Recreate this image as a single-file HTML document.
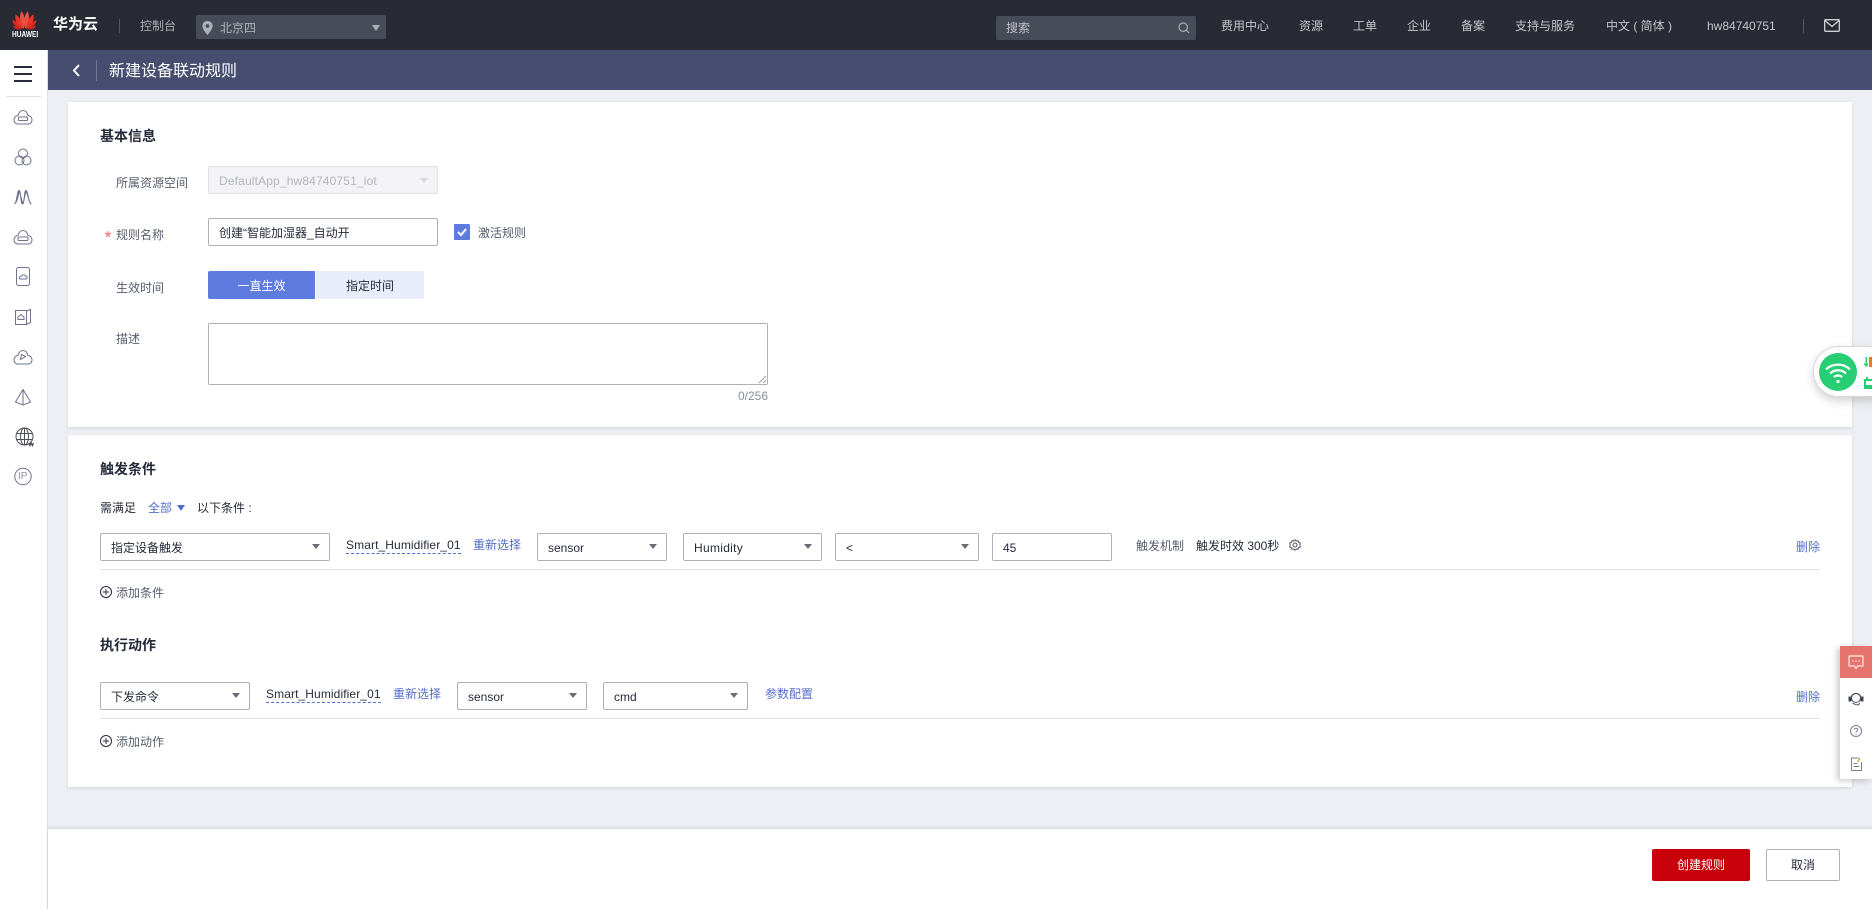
<!DOCTYPE html>
<html lang="zh-CN">
<head>
<meta charset="utf-8">
<title>新建设备联动规则</title>
<style>
*{box-sizing:border-box}
html,body{margin:0;padding:0;width:1872px;height:909px;overflow:hidden;background:#eeeff4}
body{position:relative;font-family:"Liberation Sans","Noto Sans CJK SC",sans-serif;font-size:12px;color:#252b3a}
.a{position:absolute}
.t{position:absolute;line-height:20px;height:20px;white-space:nowrap}
.n{color:#c4c6cc}
.l{color:#575d6c}
.b{font-weight:700;font-size:14px;color:#252b3a}
.lk{color:#526ecc}
.sel,.inp{position:absolute;background:#fff;border:1px solid #adb0b8;border-radius:2px;line-height:28px;padding-left:10px;white-space:nowrap;color:#252b3a}
.sel:after{content:"";position:absolute;right:9px;top:10px;border-style:solid;border-color:#6a6d78 transparent transparent;border-width:5px 4px 0}
.dis{position:absolute;background:#f3f3f5;border:1px solid #dfe1e6;border-radius:2px;line-height:28px;padding-left:10px;white-space:nowrap;color:#b4b6bd;letter-spacing:.15px}
.hr{position:absolute;height:1px;background:#dfe1e6}
.card{position:absolute;background:#fff;box-shadow:0 1px 3px rgba(0,0,0,.12)}
svg{position:absolute;display:block;overflow:visible}
</style>
</head>
<body>
<!-- top bar -->
<div class="a" style="left:0;top:0;width:1872px;height:50px;background:#282b33"></div>
<svg style="left:12px;top:11px" width="25" height="19" viewBox="0 0 25 19">
<path d="M11.700 18C8 13 7 5.500 9.200.5 12.200 2 13.800 10 11.700 18Z" fill="#f0503f"/>
<path d="M13.300 18C17 13 18 5.500 15.800.5 12.800 2 11.200 10 13.300 18Z" fill="#f0503f"/>
<path d="M10.700 18C5 15 2.500 9 3.500 3.500 7.500 5.500 10.700 11.500 10.700 18Z" fill="#e8352a"/>
<path d="M14.300 18C20 15 22.500 9 21.500 3.500 17.500 5.500 14.300 11.500 14.300 18Z" fill="#e8352a"/>
<path d="M9.800 18C5 17 1 13.500 .2 9 4.500 10.500 8.300 14 9.800 18Z" fill="#dd2a20"/>
<path d="M15.200 18C20 17 24 13.500 24.800 9 20.500 10.500 16.700 14 15.200 18Z" fill="#dd2a20"/>
<path d="M9 18.500C5 19 2 17.500 .5 14.800 4 15 7 16 9 18.500Z" fill="#cf231b"/>
<path d="M16 18.500C20 19 23 17.500 24.500 14.800 21 15 18 16 16 18.500Z" fill="#cf231b"/>
</svg>
<div class="t" style="left:12px;top:25px;color:#fff;font-size:8px;font-weight:700;transform:scaleX(.82);transform-origin:left center">HUAWEI</div>
<div class="t" style="left:53px;top:15px;color:#fff;font-size:15px;font-weight:700">华为云</div>
<div class="a" style="left:119px;top:19px;width:1px;height:14px;background:#555963"></div>
<div class="t" style="left:140px;top:16px;color:#aeb0b6">控制台</div>
<div class="a" style="left:196px;top:15px;width:190px;height:24px;background:#484c58;border-radius:2px"></div>
<svg style="left:202px;top:21px" width="11" height="14" viewBox="0 0 11 14"><path d="M5.500 0C2.500 0 .4 2.200.4 5c0 3.400 5.100 9 5.100 9s5.100-5.600 5.100-9C10.600 2.200 8.500 0 5.500 0z" fill="#aeb1b8"/><circle cx="5.500" cy="5" r="1.900" fill="#484c58"/></svg>
<div class="t" style="left:220px;top:18px;color:#aeb1b8">北京四</div>
<svg style="left:372px;top:25px" width="8" height="6"><path d="M0 0h8L4 6z" fill="#aeb1b8"/></svg>
<div class="a" style="left:996px;top:16px;width:200px;height:24px;background:#484c58;border-radius:2px"></div>
<div class="t" style="left:1006px;top:18px;color:#c0c2c8">搜索</div>
<svg style="left:1178px;top:22px" width="12" height="12" viewBox="0 0 12 12" fill="none" stroke="#a8abb2" stroke-width="1.200"><circle cx="5.200" cy="5.200" r="4.200"/><path d="M8.200 8.200 11 11"/></svg>
<div class="t n" style="left:1221px;top:16px">费用中心</div>
<div class="t n" style="left:1299px;top:16px">资源</div>
<div class="t n" style="left:1353px;top:16px">工单</div>
<div class="t n" style="left:1407px;top:16px">企业</div>
<div class="t n" style="left:1461px;top:16px">备案</div>
<div class="t n" style="left:1515px;top:16px">支持与服务</div>
<div class="t n" style="left:1606px;top:16px">中文 ( 简体 )</div>
<div class="t n" style="left:1707px;top:16px">hw84740751</div>
<div class="a" style="left:1803px;top:19px;width:1px;height:14px;background:#555963"></div>
<svg style="left:1824px;top:19px" width="16" height="13" viewBox="0 0 16 13" fill="none" stroke="#cfd1d6" stroke-width="1.300"><rect x=".7" y=".7" width="14.600" height="11.600" rx="1"/><path d="M1 1.500 8 7.500 15 1.500"/></svg>

<!-- sub header -->
<div class="a" style="left:48px;top:50px;width:1824px;height:40px;background:#474d6e"></div>
<svg style="left:72px;top:64px" width="9" height="13" viewBox="0 0 9 13" fill="none" stroke="#fff" stroke-width="2"><path d="M7 1 2 6.500 7 12"/></svg>
<div class="a" style="left:96px;top:60px;width:1px;height:21px;background:#6f7593"></div>
<div class="t" style="left:109px;top:62px;color:#fff;font-size:16px">新建设备联动规则</div>

<!-- sidebar -->
<div class="a" style="left:0;top:50px;width:48px;height:859px;background:#fff;border-right:1px solid #dfe1e6"></div>
<div class="a" style="left:14px;top:66px;width:18px;height:2px;background:#252b3a"></div>
<div class="a" style="left:14px;top:73px;width:18px;height:2px;background:#252b3a"></div>
<div class="a" style="left:14px;top:80px;width:18px;height:2px;background:#252b3a"></div>
<div class="a" style="left:6px;top:96px;width:35px;height:1px;background:#dfe1e6"></div>
<svg style="left:0;top:100px" width="48" height="400" viewBox="0 0 48 400" fill="none" stroke="#6e7390" stroke-width="1">
<path d="M18 24h10c2.800 0 4-2.200 4-4.200 0-2.300-1.800-4.200-4-4.300-.8-3-2.500-5-5-5s-4.200 2-5 5c-2.200.1-4 2-4 4.300 0 2 1.200 4.200 4 4.200z"/><rect x="18.500" y="17" width="9" height="3.500" rx=".5"/>
<circle cx="23" cy="53.500" r="4.500"/><circle cx="19.500" cy="60.500" r="4.500"/><circle cx="26.500" cy="60.500" r="4.500"/>
<path d="M14.500 104c2.500-1 2.500-13.500 4.500-13.500S20.500 104 22.500 104 24 90.500 26 90.500 28 103 31.500 104M14.500 104c1.500-1 3.500-4 4.500-13.500M23 104c1-3 1.500-7 3-13.500M23 104c-1-3-2-7-4-13.500M31 104c-2-3-3-7-5-13.500"/>
<path d="M18 144h10c2.800 0 4-2.200 4-4.200 0-2.300-1.800-4.200-4-4.300-.8-3-2.500-5-5-5s-4.200 2-5 5c-2.200.1-4 2-4 4.300 0 2 1.200 4.200 4 4.200z"/><rect x="18" y="137" width="10" height="3.500" rx="1"/>
<rect x="16.500" y="167.500" width="13" height="18" rx="2"/><path d="M20 179h6c1.500 0 1.500-3-.5-3-.5-1.500-3.500-1.500-4 0-2 0-2.500 3-1.500 3z"/>
<rect x="15.500" y="210.500" width="11" height="14" /><path d="M26.500 211l4-1.500v13l-4 2M18 219.500h6V217l-3-2.500-3 2.500z"/>
<path d="M18 264h10c2.800 0 4-2.200 4-4.200 0-2.300-1.800-4.200-4-4.300-.8-3-2.500-5-5-5s-4.200 2-5 5c-2.200.1-4 2-4 4.300 0 2 1.200 4.200 4 4.200z"/><path d="M20.500 259.500l1-5 4 2z"/>
<path d="M23 289.500l-7.500 12.500 7.500 3 7.500-3zM23 289.500V305"/>
<g stroke="#4b4e58"><circle cx="24.500" cy="336.500" r="8.500"/><ellipse cx="24.500" cy="336.500" rx="4" ry="8.500"/><path d="M16.500 333.500h16M16.500 339.500h16M24.500 328v17"/><path d="M29 343l1 2.500 1.200-2.500 1.200 2.500 1-2.500" stroke-width="1.300"/></g>
<circle cx="23" cy="376.500" r="8.200"/>
</svg>
<div class="t" style="left:18px;top:467px;font-size:10px;color:#8a8fa8">IP</div>

<!-- card 1 -->
<div class="card" style="left:68px;top:102px;width:1784px;height:325px"></div>
<div class="t b" style="left:100px;top:126px">基本信息</div>
<div class="t l" style="left:116px;top:173px">所属资源空间</div>
<div class="dis" style="left:208px;top:166px;width:230px;height:28px">DefaultApp_hw84740751_iot</div>
<svg style="left:420px;top:178px" width="8" height="5"><path d="M0 0h8L4 5z" fill="#d6d8dd"/></svg>
<svg style="left:104px;top:230px" width="8" height="8" viewBox="0 0 8 8"><path d="M4 0l.9 2.900H8L5.500 4.700l1 3L4 5.900 1.500 7.700l1-3L0 2.900h3.100z" fill="#f88a84"/></svg>
<div class="t l" style="left:116px;top:225px">规则名称</div>
<div class="inp" style="left:208px;top:218px;width:230px;height:28px">创建“智能加湿器_自动开</div>
<div class="a" style="left:454px;top:224px;width:16px;height:16px;background:#5e7ce0;border-radius:1px"></div>
<svg style="left:457px;top:228px" width="10" height="8" fill="none" stroke="#fff" stroke-width="2"><path d="M1 4l3 3 5-6"/></svg>
<div class="t l" style="left:478px;top:223px">激活规则</div>
<div class="t l" style="left:116px;top:278px">生效时间</div>
<div class="a" style="left:208px;top:271px;width:107px;height:28px;background:#5e7ce0;border-radius:2px 0 0 2px;color:#fff;text-align:center;line-height:30px">一直生效</div>
<div class="a" style="left:316px;top:271px;width:108px;height:28px;background:#e9edfa;border-radius:0 2px 2px 0;color:#252b3a;text-align:center;line-height:30px">指定时间</div>
<div class="t l" style="left:116px;top:329px">描述</div>
<div class="a" style="left:208px;top:323px;width:560px;height:62px;border:1px solid #adb0b8;border-radius:2px;background:#fff"></div>
<svg style="left:758px;top:375px" width="9" height="9" stroke="#9a9ca6" stroke-width="1"><path d="M8 1 1 8M8 5 5 8"/></svg>
<div class="t" style="right:1104px;top:386px;color:#8a8e99">0/256</div>

<!-- card 2 -->
<div class="card" style="left:68px;top:435px;width:1784px;height:352px"></div>
<div class="t b" style="left:100px;top:459px">触发条件</div>
<div class="t" style="left:100px;top:498px">需满足</div>
<div class="t lk" style="left:148px;top:498px">全部</div>
<svg style="left:177px;top:505px" width="8" height="6"><path d="M0 0h8L4 6z" fill="#526ecc"/></svg>
<div class="t" style="left:197px;top:498px">以下条件 :</div>

<div class="sel" style="left:100px;top:533px;width:230px;height:28px">指定设备触发</div>
<div class="t" style="left:346px;top:535px;color:#252b3a;letter-spacing:.1px">Smart_Humidifier_01</div>
<div class="a" style="left:346px;top:553px;width:115px;border-top:1px dashed #526ecc"></div>
<div class="t lk" style="left:473px;top:535px">重新选择</div>
<div class="sel" style="left:537px;top:533px;width:130px;height:28px">sensor</div>
<div class="sel" style="left:683px;top:533px;width:139px;height:28px"><span style="letter-spacing:.3px">Humidity</span></div>
<div class="sel" style="left:835px;top:533px;width:144px;height:28px">&lt;</div>
<div class="inp" style="left:992px;top:533px;width:120px;height:28px">45</div>
<div class="t l" style="left:1136px;top:536px">触发机制</div>
<div class="t" style="left:1196px;top:536px">触发时效 300秒</div>
<svg style="left:1289px;top:539px" width="12" height="12" viewBox="0 0 12 12" fill="none" stroke="#4f5566" stroke-width="1"><path d="M6 .8 7.300 2l1.700-.3.600 1.700 1.600.6L10.900 6l.3 2-1.600.6-.6 1.700L7.300 10 6 11.200 4.700 10l-1.700.3-.6-1.700L.8 8l.3-2-.3-2 1.600-.6L3 1.700 4.700 2z"/><circle cx="6" cy="6" r="2"/></svg>
<div class="t lk" style="left:1796px;top:537px">删除</div>
<div class="hr" style="left:100px;top:569px;width:1720px"></div>
<svg style="left:100px;top:586px" width="12" height="12" viewBox="0 0 12 12" fill="none" stroke="#252b3a" stroke-width="1"><circle cx="6" cy="6" r="5.500"/><path d="M3 6h6M6 3v6"/></svg>
<div class="t l" style="left:116px;top:583px">添加条件</div>

<div class="t b" style="left:100px;top:635px">执行动作</div>
<div class="sel" style="left:100px;top:682px;width:150px;height:28px">下发命令</div>
<div class="t" style="left:266px;top:684px;color:#252b3a;letter-spacing:.1px">Smart_Humidifier_01</div>
<div class="a" style="left:266px;top:702px;width:115px;border-top:1px dashed #526ecc"></div>
<div class="t lk" style="left:393px;top:684px">重新选择</div>
<div class="sel" style="left:457px;top:682px;width:130px;height:28px">sensor</div>
<div class="sel" style="left:603px;top:682px;width:145px;height:28px">cmd</div>
<div class="t lk" style="left:765px;top:684px">参数配置</div>
<div class="t lk" style="left:1796px;top:687px">删除</div>
<div class="hr" style="left:100px;top:718px;width:1720px"></div>
<svg style="left:100px;top:735px" width="12" height="12" viewBox="0 0 12 12" fill="none" stroke="#252b3a" stroke-width="1"><circle cx="6" cy="6" r="5.500"/><path d="M3 6h6M6 3v6"/></svg>
<div class="t l" style="left:116px;top:732px">添加动作</div>

<!-- footer -->
<div class="a" style="left:48px;top:829px;width:1824px;height:80px;background:#fff;box-shadow:0 -1px 3px rgba(0,0,0,.12)"></div>
<div class="a" style="left:1652px;top:849px;width:98px;height:32px;background:#c7000b;border-radius:2px;color:#fff;text-align:center;line-height:32px">创建规则</div>
<div class="a" style="left:1766px;top:849px;width:74px;height:32px;background:#fff;border:1px solid #adb0b8;border-radius:2px;text-align:center;line-height:30px">取消</div>

<!-- wifi widget -->
<div class="a" style="left:1813px;top:346px;width:80px;height:51px;background:#fff;border:1px solid #d8d8d8;border-radius:26px;box-shadow:0 4px 10px rgba(0,0,0,.18)"></div>
<div class="a" style="left:1819px;top:353px;width:38px;height:38px;border-radius:50%;background:#27ce74"></div>
<svg style="left:1825px;top:362px" width="26" height="22" viewBox="0 0 26 22" fill="none" stroke="#fff" stroke-width="2.200"><path d="M1 7.500C7.500 1 18.500 1 25 7.500M5 11.500c4.500-4.300 11.500-4.300 16 0M9 15c2.300-2 5.700-2 8 0"/><circle cx="13" cy="19.500" r="1.600" fill="#fff" stroke="none"/></svg>
<svg style="left:1864px;top:357px" width="8" height="32" viewBox="0 0 8 32"><path d="M1.500 0h1.500v7l1-1v2l-1.800 2L0 7.500V6l1.500 1z" fill="#27ce74"/><path d="M5 0h3v10H5z" fill="#f07a1e"/><path d="M0 22h2v-2h2v2h4v10H0zM2 24v4h6v-4z" fill="#27ce74" fill-rule="evenodd"/></svg>

<!-- right tools -->
<div class="a" style="left:1840px;top:646px;width:32px;height:133px;background:#fff;box-shadow:-3px 2px 6px rgba(0,0,0,.2)"></div>
<div class="a" style="left:1840px;top:646px;width:32px;height:32px;background:#e5756c"></div>
<svg style="left:1848px;top:655px" width="16" height="15" viewBox="0 0 16 15" fill="none" stroke="#fff" stroke-width="1"><path d="M1 1h14v10H9.500L8 13.500 6.500 11H1z"/><path d="M4.500 6h1M7.500 6h1M10.500 6h1" stroke-width="1.300"/></svg>
<svg style="left:1848px;top:691px" width="16" height="15" viewBox="0 0 16 15" fill="none" stroke="#4a4f60" stroke-width="1"><path d="M3 8C3 .5 13 .5 13 8M4.500 12c4 2.500 7 2.500 7 0"/><circle cx="8" cy="7" r="4.500"/><rect x="1" y="6" width="2" height="4" fill="#252b3a"/><rect x="13" y="6" width="2" height="4" fill="#252b3a"/></svg>
<svg style="left:1850px;top:725px" width="12" height="12" viewBox="0 0 12 12" fill="none" stroke="#7a7f92" stroke-width="1"><circle cx="6" cy="6" r="5.500"/><path d="M4.300 4.600C4.500 2.700 7.800 2.800 7.800 4.700 7.800 6 6 6 6 7.500M6 8.600v1"/></svg>
<svg style="left:1850px;top:757px" width="13" height="14" viewBox="0 0 13 14" fill="none" stroke="#7a7f92" stroke-width="1"><path d="M11.500 5v8.500h-10V1h7"/><path d="M3.500 6.500h4M3.500 9.500h6"/><path d="M10 1 7.500 5" stroke="#d99b3c" stroke-width="1.300"/></svg>
</body>
</html>
